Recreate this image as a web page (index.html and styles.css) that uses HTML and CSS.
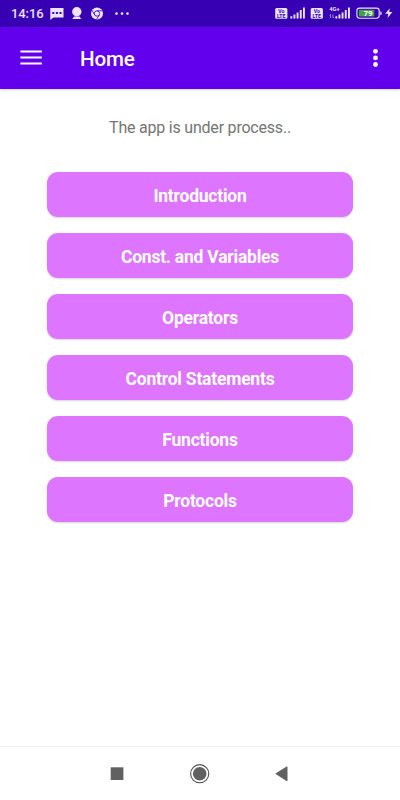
FILE: index.html
```html
<!DOCTYPE html>
<html lang="en">
<head>
<meta charset="utf-8">
<title>Home</title>
<link rel="stylesheet" href="styles.css">
</head>
<body>
<div class="status-bar">
  <span class="clock">14:16</span>
  <svg class="notifications" width="80" height="27" viewBox="50 0 80 27" fill="#ece3ff">
    <path d="M50.3 8h13.2v9.4H53.5l-3.2 2.7z"/>
    <path d="M52.3 12h2v2h-2zM55.9 12h2v2h-2zM59.5 12h2v2h-2z" fill="#3700b3"/>
    <circle cx="76.8" cy="11.8" r="4.7"/>
    <path d="M72.3 19l1.8-2.4h5.4l1.8 2.4z"/>
    <circle cx="97" cy="13.5" r="6"/>
    <g fill="none" stroke="#3700b3" stroke-width=".8"><circle cx="97" cy="13.5" r="2.7"/><path d="M97 10.8h5.3M94.7 14.9l-2.8-4.7M99.3 14.9l-2.8 4.5"/></g>
    <circle cx="97" cy="13.5" r="1.5"/>
    <circle cx="116.5" cy="13.6" r="1.3"/><circle cx="122" cy="13.6" r="1.3"/><circle cx="127.5" cy="13.6" r="1.3"/>
  </svg>
  <svg class="signals" width="120" height="27" viewBox="275 0 120 27" fill="#ece3ff">
    <rect x="275.2" y="8" width="12.2" height="10.7" rx="1.5"/>
    <rect x="310.7" y="8" width="12.2" height="10.7" rx="1.5"/>
    <g class="volte"><text x="281.3" y="13.1">Vo</text><text x="281.3" y="17.9">LTE</text><text x="316.8" y="13.1">Vo</text><text x="316.8" y="17.9">LTE</text></g>
    <path d="M290.4 16.2h1.9v2.3h-1.9zM293.5 14.6h1.9v3.9h-1.9zM296.6 12.4h1.9v6.1h-1.9zM299.8 10h1.9v8.5h-1.9zM303 7.6h1.9v10.9h-1.9z"/>
    <path d="M335.4 16.2h1.9v2.3h-1.9zM338.5 14.6h1.9v3.9h-1.9zM341.6 12.4h1.9v6.1h-1.9zM344.8 10h1.9v8.5h-1.9zM348 7.6h1.9v10.9h-1.9z"/>
    <text class="network" x="329.2" y="10.8">4G+</text>
    <path d="M330.6 18v-3.6l-.9 1M333 14.4V18l.9-1" fill="none" stroke="#c9b6f4" stroke-width=".7"/>
    <rect x="356.9" y="8.1" width="22.3" height="10.2" rx="2.7" fill="none" stroke="#ece3ff" stroke-width="1.1"/>
    <rect x="358.8" y="9.8" width="15.5" height="6.8" rx="1" fill="#43a047"/>
    <path d="M380.3 11.2q1.4 0 1.4 2t-1.4 2z"/>
    <text class="charge" x="368" y="16">79</text>
    <path d="M389.8 8.2l-4.6 5.6h3l-.6 4.2 4.8-6h-3.2z"/>
  </svg>
</div>
<header class="app-bar">
  <svg class="menu" width="22" height="16" viewBox="0 0 22 16" fill="#fff"><path d="M.4.4h21.4v2.1H.4zM.4 6.5h21.4v2.1H.4zM.4 12.5h21.4v2.1H.4z"/></svg>
  <h1 class="title">Home</h1>
  <svg class="more" width="6" height="20" viewBox="0 0 6 20" fill="#fff"><circle cx="2.5" cy="3.3" r="2.4"/><circle cx="2.5" cy="9.9" r="2.4"/><circle cx="2.5" cy="16.5" r="2.4"/></svg>
</header>
<main class="content">
  <p class="note">The app is under process..</p>
  <nav class="topics">
    <button class="topic">Introduction</button>
    <button class="topic">Const. and Variables</button>
    <button class="topic">Operators</button>
    <button class="topic">Control Statements</button>
    <button class="topic">Functions</button>
    <button class="topic">Protocols</button>
  </nav>
</main>
<footer class="system-nav">
  <svg width="20" height="20" viewBox="0 0 20 20" fill="#616161"><rect x="2.7" y="3.3" width="12.7" height="12.7"/></svg>
  <svg width="20" height="20" viewBox="0 0 20 20" fill="#616161"><circle cx="9.7" cy="9.7" r="9.1" fill="none" stroke="#505050" stroke-width="1.1"/><circle cx="9.7" cy="9.7" r="6.8"/></svg>
  <svg width="20" height="20" viewBox="0 0 20 20" fill="#616161"><path d="M2.2 9.7L13.6 2.5q.9-.4.9.5v13.4q0 .9-.9.5z"/></svg>
</footer>
</body>
</html>
```
FILE: styles.css
```css
* { box-sizing: border-box; }

body {
  margin: 0;
  height: 800px;
  display: flex;
  flex-direction: column;
  background: #fff;
  font-family: Roboto, "Liberation Sans", sans-serif;
}

.status-bar {
  display: flex;
  align-items: center;
  height: 27px;
  flex: none;
  padding: 0 5px 0 11px;
  background: #3700b3;
}

.clock {
  width: 39px;
  color: #ece3ff;
  font-size: 13px;
  font-weight: 500;
  line-height: 28px;
  letter-spacing: -.1px;
}

.signals { margin-left: auto; }

.volte {
  fill: #3700b3;
  font-size: 5.2px;
  font-weight: 700;
  text-anchor: middle;
}

.network {
  font-size: 5.8px;
  font-weight: 700;
}

.charge {
  fill: #fff;
  font-size: 8px;
  font-weight: 700;
  text-anchor: middle;
}

.app-bar {
  display: flex;
  align-items: center;
  height: 62px;
  flex: none;
  padding: 0 21px 0 20px;
  background: #6200ee;
  box-shadow: 0 1px 2px rgba(0, 0, 0, .18);
}

.title {
  margin: 0 auto 0 38px;
  color: #fff;
  font-size: 20.6px;
  font-weight: 500;
  line-height: 24px;
  letter-spacing: -.15px;
  padding-top: 1px;
}

.content {
  flex: 1;
  padding: 29px 47px 0;
}

.note {
  margin: 0;
  color: #757575;
  font-size: 16px;
  font-weight: 400;
  line-height: 20px;
  letter-spacing: -.21px;
  text-align: center;
}

.topics {
  display: flex;
  flex-direction: column;
  gap: 16.6px;
  margin-top: 34px;
}

.topic {
  height: 44.5px;
  padding: 3px 0 0;
  border: 0;
  border-radius: 11px;
  background: #dd75ff;
  box-shadow: 0 1px 2px rgba(0, 0, 0, .17);
  color: #fff;
  font: 700 17.5px/22px Roboto, "Liberation Sans", sans-serif;
  letter-spacing: -.22px;
}

.system-nav {
  display: flex;
  align-items: center;
  justify-content: center;
  gap: 62.5px;
  height: 54px;
  flex: none;
  border-top: 1px solid #f0f0f0;
}
```
